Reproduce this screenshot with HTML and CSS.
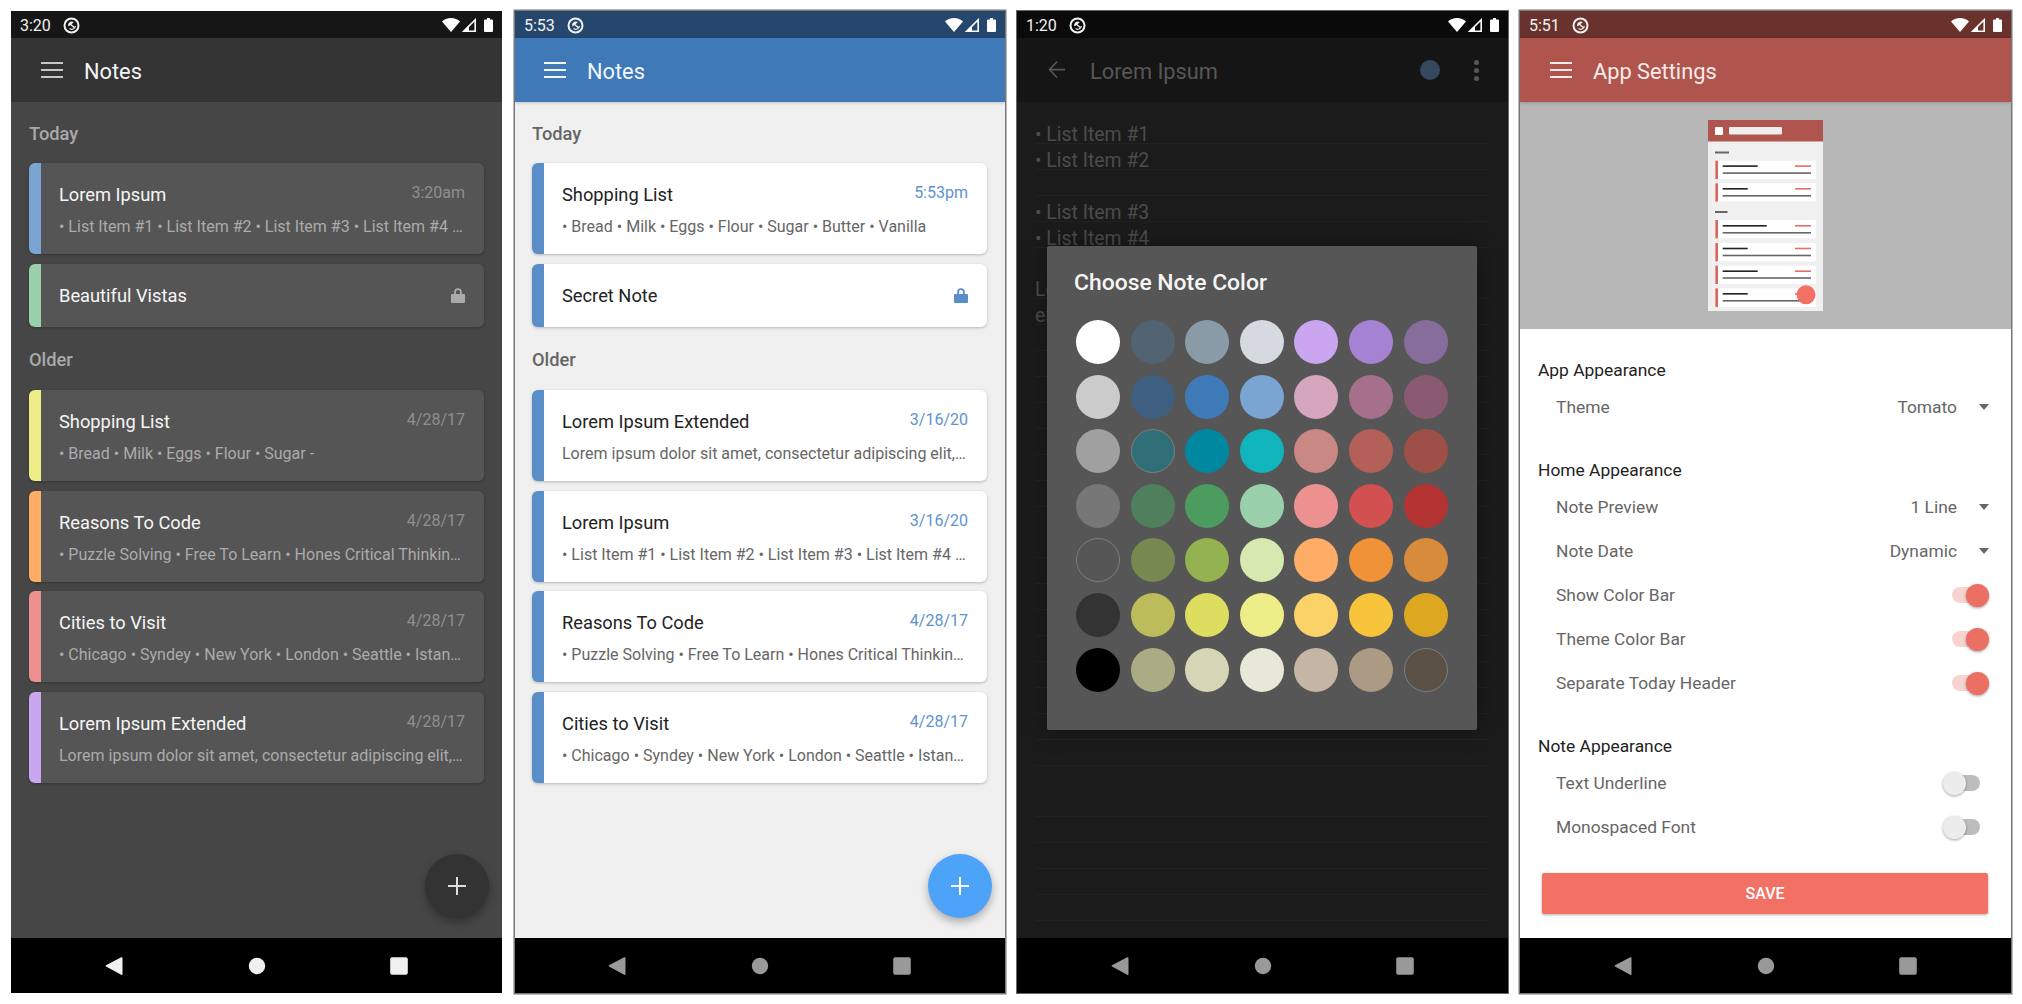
FILE: index.html
```html
<!DOCTYPE html>
<html lang="en">
  <head>
    <meta charset="UTF-8" />
    <title>Notes screenshots</title>
    <link rel="stylesheet" href="styles.css">
  </head>
  <body>
    <!-- shared icons -->
    <svg class="icon-sprite" width="0" height="0">
      <symbol id="i-saver" viewBox="0 0 17 17">
        <circle cx="8.5" cy="8.5" r="7" fill="none" stroke="currentColor" stroke-width="2" />
        <path d="M5.2 7.2a3.6 3.6 0 0 1 5.6-2L5.6 9.6a3.6 3.6 0 0 1-.4-2.4z" fill="currentColor" />
        <path d="M6.5 11.6a3.8 3.8 0 0 0 5.9-2.6" fill="none" stroke="currentColor" stroke-width="1.2" />
        <path d="M7 7l4.6 3.8" fill="none" stroke="currentColor" stroke-width="1.4" />
      </symbol>
      <symbol id="i-wifi" viewBox="0 0 18 14">
        <path d="M9 14L0 3.6C2.2 1.4 5.4 0 9 0s6.8 1.4 9 3.6z" fill="currentColor" />
      </symbol>
      <symbol id="i-cell" viewBox="0 0 14 14">
        <path d="M13.2 1.8V13.2H1.8z" fill="none" stroke="currentColor" stroke-width="1.6" />
        <path d="M7 8h-.2L1.8 13.2H7z" fill="currentColor" />
      </symbol>
      <symbol id="i-battery" viewBox="0 0 9 14">
        <path d="M3 0h3v1.4h2a1 1 0 0 1 1 1V13a1 1 0 0 1-1 1H1a1 1 0 0 1-1-1V2.4a1 1 0 0 1 1-1h2z" fill="currentColor" />
      </symbol>
      <symbol id="i-menu" viewBox="0 0 22 16">
        <path d="M0 0h22v2H0zM0 7h22v2H0zM0 14h22v2H0z" fill="currentColor" />
      </symbol>
      <symbol id="i-lock" viewBox="0 0 14 15">
        <path d="M3.2 6V4a3.8 3.8 0 0 1 7.6 0v2H13a1 1 0 0 1 1 1v7a1 1 0 0 1-1 1H1a1 1 0 0 1-1-1V7a1 1 0 0 1 1-1zM5 6h4V4a2 2 0 0 0-4 0z" fill="currentColor" />
      </symbol>
      <symbol id="i-back" viewBox="0 0 18 20">
        <path d="M17 8.8v1.6H3.4L9.6 17l-1.1 1.1L0.4 9.6 8.5 1.1 9.6 2.2 3.4 8.8z" fill="currentColor" />
      </symbol>
      <symbol id="i-plus" viewBox="0 0 18 18">
        <path d="M8 0h2v8h8v2h-8v8H8v-8H0V8h8z" fill="currentColor" />
      </symbol>
      <symbol id="i-nav-back" viewBox="1 0 20 20">
        <path d="M18.5 2v16c0 .8-.7 1.1-1.3.7L2 10.6c-.5-.3-.5-1 0-1.3L17.2 1.3c.6-.4 1.3 0 1.3.7z" fill="currentColor" />
      </symbol>
      <symbol id="i-nav-home" viewBox="0 0 20 20">
        <circle cx="10" cy="10" r="8.2" fill="currentColor" />
      </symbol>
      <symbol id="i-nav-recent" viewBox="0 0 20 20">
        <rect x="1.2" y="1.2" width="17.6" height="17.6" rx="2" fill="currentColor" />
      </symbol>
    </svg>

    <!-- dark home -->
    <div class="phone theme-dark">
      <div class="status-bar">
        <span class="status-time">3:20</span>
        <svg class="status-saver"><use href="#i-saver" /></svg>
        <div class="status-icons">
          <svg class="ic-wifi"><use href="#i-wifi" /></svg>
          <svg class="ic-cell"><use href="#i-cell" /></svg>
          <svg class="ic-battery"><use href="#i-battery" /></svg>
        </div>
      </div>
      <div class="toolbar">
        <svg class="toolbar-icon"><use href="#i-menu" /></svg>
        <div class="toolbar-title">Notes</div>
      </div>
      <div class="screen note-list">
        <div class="list-heading">Today</div>
        <div class="note-card" style="border-left-color: #7aa5d3">
          <div class="note-head"><span class="note-title">Lorem Ipsum</span><span class="note-date">3:20am</span></div>
          <div class="note-preview">• List Item #1 • List Item #2 • List Item #3 • List Item #4 …</div>
        </div>
        <div class="note-card note-card-locked" style="border-left-color: #99cfab">
          <div class="note-head"><span class="note-title">Beautiful Vistas</span><svg class="note-lock"><use href="#i-lock" /></svg></div>
        </div>
        <div class="list-heading list-heading-older">Older</div>
        <div class="note-card" style="border-left-color: #eeee88">
          <div class="note-head"><span class="note-title">Shopping List</span><span class="note-date">4/28/17</span></div>
          <div class="note-preview">• Bread • Milk • Eggs • Flour • Sugar -</div>
        </div>
        <div class="note-card" style="border-left-color: #ffad66">
          <div class="note-head"><span class="note-title">Reasons To Code</span><span class="note-date">4/28/17</span></div>
          <div class="note-preview">• Puzzle Solving • Free To Learn • Hones Critical Thinkin…</div>
        </div>
        <div class="note-card" style="border-left-color: #ec9090">
          <div class="note-head"><span class="note-title">Cities to Visit</span><span class="note-date">4/28/17</span></div>
          <div class="note-preview">• Chicago • Syndey • New York • London • Seattle • Istan…</div>
        </div>
        <div class="note-card" style="border-left-color: #c9a6ef">
          <div class="note-head"><span class="note-title">Lorem Ipsum Extended</span><span class="note-date">4/28/17</span></div>
          <div class="note-preview">Lorem ipsum dolor sit amet, consectetur adipiscing elit,…</div>
        </div>
        <div class="fab"><svg class="fab-plus"><use href="#i-plus" /></svg></div>
      </div>
      <div class="nav-bar">
        <svg><use href="#i-nav-back" /></svg>
        <svg><use href="#i-nav-home" /></svg>
        <svg><use href="#i-nav-recent" /></svg>
      </div>
    </div>

    <!-- light home -->
    <div class="phone theme-blue">
      <div class="status-bar">
        <span class="status-time">5:53</span>
        <svg class="status-saver"><use href="#i-saver" /></svg>
        <div class="status-icons">
          <svg class="ic-wifi"><use href="#i-wifi" /></svg>
          <svg class="ic-cell"><use href="#i-cell" /></svg>
          <svg class="ic-battery"><use href="#i-battery" /></svg>
        </div>
      </div>
      <div class="toolbar">
        <svg class="toolbar-icon"><use href="#i-menu" /></svg>
        <div class="toolbar-title">Notes</div>
      </div>
      <div class="screen note-list">
        <div class="list-heading">Today</div>
        <div class="note-card">
          <div class="note-head"><span class="note-title">Shopping List</span><span class="note-date">5:53pm</span></div>
          <div class="note-preview">• Bread • Milk • Eggs • Flour • Sugar • Butter • Vanilla</div>
        </div>
        <div class="note-card note-card-locked">
          <div class="note-head"><span class="note-title">Secret Note</span><svg class="note-lock"><use href="#i-lock" /></svg></div>
        </div>
        <div class="list-heading list-heading-older">Older</div>
        <div class="note-card">
          <div class="note-head"><span class="note-title">Lorem Ipsum Extended</span><span class="note-date">3/16/20</span></div>
          <div class="note-preview">Lorem ipsum dolor sit amet, consectetur adipiscing elit,…</div>
        </div>
        <div class="note-card">
          <div class="note-head"><span class="note-title">Lorem Ipsum</span><span class="note-date">3/16/20</span></div>
          <div class="note-preview">• List Item #1 • List Item #2 • List Item #3 • List Item #4 …</div>
        </div>
        <div class="note-card">
          <div class="note-head"><span class="note-title">Reasons To Code</span><span class="note-date">4/28/17</span></div>
          <div class="note-preview">• Puzzle Solving • Free To Learn • Hones Critical Thinkin…</div>
        </div>
        <div class="note-card">
          <div class="note-head"><span class="note-title">Cities to Visit</span><span class="note-date">4/28/17</span></div>
          <div class="note-preview">• Chicago • Syndey • New York • London • Seattle • Istan…</div>
        </div>
        <div class="fab"><svg class="fab-plus"><use href="#i-plus" /></svg></div>
      </div>
      <div class="nav-bar">
        <svg><use href="#i-nav-back" /></svg>
        <svg><use href="#i-nav-home" /></svg>
        <svg><use href="#i-nav-recent" /></svg>
      </div>
    </div>

    <!-- note editor with colour dialog -->
    <div class="phone theme-dim">
      <div class="status-bar">
        <span class="status-time">1:20</span>
        <svg class="status-saver"><use href="#i-saver" /></svg>
        <div class="status-icons">
          <svg class="ic-wifi"><use href="#i-wifi" /></svg>
          <svg class="ic-cell"><use href="#i-cell" /></svg>
          <svg class="ic-battery"><use href="#i-battery" /></svg>
        </div>
      </div>
      <div class="toolbar">
        <svg class="toolbar-back"><use href="#i-back" /></svg>
        <div class="toolbar-title toolbar-title-back">Lorem Ipsum</div>
        <div class="toolbar-dot"></div>
        <div class="toolbar-more"><span></span><span></span><span></span></div>
      </div>
      <div class="screen note-edit">
        <div class="note-lines">
          <div>• List Item #1</div>
          <div>• List Item #2</div>
          <div>&nbsp;</div>
          <div>• List Item #3</div>
          <div>• List Item #4</div>
          <div>&nbsp;</div>
          <div>Lorem ipsum dolor sit amet,</div>
          <div>eiusmod tempor incididunt</div>
        </div>
        <div class="color-dialog">
          <div class="color-dialog-title">Choose Note Color</div>
          <div class="color-grid">
            <div class="swatch" style="background: #ffffff"></div>
            <div class="swatch" style="background: #526372"></div>
            <div class="swatch" style="background: #8a9ba8"></div>
            <div class="swatch" style="background: #d5dae0"></div>
            <div class="swatch" style="background: #c9a6ef"></div>
            <div class="swatch" style="background: #a682d3"></div>
            <div class="swatch" style="background: #866d9c"></div>

            <div class="swatch" style="background: #cbcbcb"></div>
            <div class="swatch" style="background: #3e5f80"></div>
            <div class="swatch" style="background: #3f7ab8"></div>
            <div class="swatch" style="background: #7aa5d3"></div>
            <div class="swatch" style="background: #d6a6bf"></div>
            <div class="swatch" style="background: #a6708c"></div>
            <div class="swatch" style="background: #895a72"></div>

            <div class="swatch" style="background: #a0a0a0"></div>
            <div class="swatch swatch-ring" style="background: #2f6f78"></div>
            <div class="swatch" style="background: #0088a0"></div>
            <div class="swatch" style="background: #10b4bb"></div>
            <div class="swatch" style="background: #c98884"></div>
            <div class="swatch" style="background: #b36058"></div>
            <div class="swatch" style="background: #9e5046"></div>

            <div class="swatch" style="background: #777777"></div>
            <div class="swatch" style="background: #4f7f5c"></div>
            <div class="swatch" style="background: #4c9c60"></div>
            <div class="swatch" style="background: #99cfab"></div>
            <div class="swatch" style="background: #ec9090"></div>
            <div class="swatch" style="background: #d25050"></div>
            <div class="swatch" style="background: #b33333"></div>

            <div class="swatch swatch-ring" style="background: #565656"></div>
            <div class="swatch" style="background: #76894f"></div>
            <div class="swatch" style="background: #94b350"></div>
            <div class="swatch" style="background: #d7e8b0"></div>
            <div class="swatch" style="background: #ffad66"></div>
            <div class="swatch" style="background: #f09338"></div>
            <div class="swatch" style="background: #d98b3d"></div>

            <div class="swatch" style="background: #333333"></div>
            <div class="swatch" style="background: #bcbc5a"></div>
            <div class="swatch" style="background: #dddd60"></div>
            <div class="swatch" style="background: #eeee88"></div>
            <div class="swatch" style="background: #fbd268"></div>
            <div class="swatch" style="background: #f8c43c"></div>
            <div class="swatch" style="background: #dda81f"></div>

            <div class="swatch" style="background: #000000"></div>
            <div class="swatch" style="background: #abab84"></div>
            <div class="swatch" style="background: #d6d5b5"></div>
            <div class="swatch" style="background: #e7e8d8"></div>
            <div class="swatch" style="background: #c4b5a5"></div>
            <div class="swatch" style="background: #ab9a84"></div>
            <div class="swatch swatch-ring" style="background: #5a5046"></div>
          </div>
        </div>
      </div>
      <div class="nav-bar">
        <svg><use href="#i-nav-back" /></svg>
        <svg><use href="#i-nav-home" /></svg>
        <svg><use href="#i-nav-recent" /></svg>
      </div>
    </div>

    <!-- settings -->
    <div class="phone theme-tomato">
      <div class="status-bar">
        <span class="status-time">5:51</span>
        <svg class="status-saver"><use href="#i-saver" /></svg>
        <div class="status-icons">
          <svg class="ic-wifi"><use href="#i-wifi" /></svg>
          <svg class="ic-cell"><use href="#i-cell" /></svg>
          <svg class="ic-battery"><use href="#i-battery" /></svg>
        </div>
      </div>
      <div class="toolbar">
        <svg class="toolbar-icon"><use href="#i-menu" /></svg>
        <div class="toolbar-title">App Settings</div>
      </div>
      <div class="screen settings">
        <div class="preview-band">
          <svg class="preview-thumb" viewBox="0 0 115 191">
            <rect width="115" height="191" fill="#f0f0f0" />
            <rect width="115" height="21.5" fill="#b0554d" />
            <rect x="7" y="7" width="8" height="8" rx="1" fill="#fff" />
            <rect x="21" y="7" width="53" height="7.5" rx="1" fill="#eee" />
            <rect x="7" y="31.5" width="14" height="2" fill="#666" />
            <rect x="7" y="91" width="12.5" height="2" fill="#666" />

            <rect x="7.3" y="40.7" width="100.7" height="18.3" fill="#fff" />
            <rect x="7.3" y="40.7" width="2.7" height="18.3" fill="#d9685f" />
            <rect x="14.7" y="45.3" width="35" height="1.6" fill="#222" />
            <rect x="87" y="45.3" width="16" height="1.6" fill="#e07068" />
            <rect x="14.7" y="52.3" width="88.3" height="1.6" fill="#666" />

            <rect x="7.3" y="63.3" width="100.7" height="18.3" fill="#fff" />
            <rect x="7.3" y="63.3" width="2.7" height="18.3" fill="#d9685f" />
            <rect x="14.7" y="68" width="25" height="1.6" fill="#222" />
            <rect x="87" y="68" width="16" height="1.6" fill="#e07068" />
            <rect x="14.7" y="75" width="88.3" height="1.6" fill="#666" />

            <rect x="7.3" y="100" width="100.7" height="18.3" fill="#fff" />
            <rect x="7.3" y="100" width="2.7" height="18.3" fill="#d9685f" />
            <rect x="14.7" y="105" width="44" height="1.6" fill="#222" />
            <rect x="87" y="105" width="16" height="1.6" fill="#e07068" />
            <rect x="14.7" y="112" width="88.3" height="1.6" fill="#666" />

            <rect x="7.3" y="123" width="100.7" height="18.3" fill="#fff" />
            <rect x="7.3" y="123" width="2.7" height="18.3" fill="#d9685f" />
            <rect x="14.7" y="127.7" width="25" height="1.6" fill="#222" />
            <rect x="87" y="127.7" width="16" height="1.6" fill="#e07068" />
            <rect x="14.7" y="134.7" width="88.3" height="1.6" fill="#666" />

            <rect x="7.3" y="145.7" width="100.7" height="18.3" fill="#fff" />
            <rect x="7.3" y="145.7" width="2.7" height="18.3" fill="#d9685f" />
            <rect x="14.7" y="150.4" width="35" height="1.6" fill="#222" />
            <rect x="87" y="150.4" width="16" height="1.6" fill="#e07068" />
            <rect x="14.7" y="157.2" width="88.3" height="1.6" fill="#666" />

            <rect x="7.3" y="168.3" width="100.7" height="18.7" fill="#fff" />
            <rect x="7.3" y="168.3" width="2.7" height="18.7" fill="#d9685f" />
            <rect x="14.7" y="173" width="25" height="1.6" fill="#222" />
            <rect x="87" y="173" width="16" height="1.6" fill="#e07068" />
            <rect x="14.7" y="180" width="88.3" height="1.6" fill="#666" />
            <circle cx="98" cy="174.7" r="9.5" fill="#f37164" />
          </svg>
        </div>
        <div class="settings-form">
          <div class="settings-section">
            <div class="settings-heading">App Appearance</div>
            <div class="settings-row"><span>Theme</span><span class="select-value">Tomato</span><i class="select-caret"></i></div>
          </div>
          <div class="settings-section">
            <div class="settings-heading">Home Appearance</div>
            <div class="settings-row"><span>Note Preview</span><span class="select-value">1 Line</span><i class="select-caret"></i></div>
            <div class="settings-row"><span>Note Date</span><span class="select-value">Dynamic</span><i class="select-caret"></i></div>
            <div class="settings-row"><span>Show Color Bar</span><div class="toggle toggle-on"><i></i></div></div>
            <div class="settings-row"><span>Theme Color Bar</span><div class="toggle toggle-on"><i></i></div></div>
            <div class="settings-row"><span>Separate Today Header</span><div class="toggle toggle-on"><i></i></div></div>
          </div>
          <div class="settings-section">
            <div class="settings-heading">Note Appearance</div>
            <div class="settings-row"><span>Text Underline</span><div class="toggle"><i></i></div></div>
            <div class="settings-row"><span>Monospaced Font</span><div class="toggle"><i></i></div></div>
          </div>
          <div class="save-button">SAVE</div>
        </div>
      </div>
      <div class="nav-bar">
        <svg><use href="#i-nav-back" /></svg>
        <svg><use href="#i-nav-home" /></svg>
        <svg><use href="#i-nav-recent" /></svg>
      </div>
    </div>
  </body>
</html>
```

FILE: styles.css
```css
* {
  box-sizing: border-box;
}

body {
  margin: 0;
  padding: 11px;
  height: 1004px;
  display: flex;
  gap: 12px;
  background-color: #fff;
  font-family: Roboto, "Liberation Sans", sans-serif;
  overflow: hidden;
}

.icon-sprite {
  position: absolute;
}

.phone {
  width: 491px;
  height: 982px;
  flex: none;
  display: flex;
  flex-direction: column;
  overflow: hidden;
}

/* status bar */
.status-bar {
  height: 27px;
  flex: none;
  display: flex;
  align-items: center;
  padding: 0 9px;
  color: #f2f2f2;
  font-size: 16px;
}

.status-time {
  width: 30px;
  margin-top: 1px;
}

.status-saver {
  width: 17px;
  height: 17px;
  margin-left: 13px;
  margin-top: 2px;
}

.status-icons {
  margin-left: auto;
  display: flex;
  align-items: center;
  color: #fff;
}

.ic-wifi {
  width: 18px;
  height: 14px;
}

.ic-cell {
  width: 14px;
  height: 14px;
  margin-left: 2px;
}

.ic-battery {
  width: 9px;
  height: 14px;
  margin-left: 8px;
}

/* toolbar */
.toolbar {
  height: 64px;
  flex: none;
  display: flex;
  align-items: center;
  padding-left: 30px;
  position: relative;
  z-index: 1;
}

.toolbar-icon {
  width: 22px;
  height: 16px;
  margin-right: 21px;
}

.toolbar-title {
  margin-top: 2px;
  font-size: 21.8px;
}

.toolbar-back {
  width: 18px;
  height: 20px;
  margin-left: 1px;
}

.toolbar-title-back {
  margin-left: 24px;
}

.toolbar-dot {
  width: 20px;
  height: 20px;
  margin-left: auto;
  border-radius: 50%;
  background-color: #34495f;
}

.toolbar-more {
  width: 5px;
  margin: 0 29px 0 34px;
  display: flex;
  flex-direction: column;
  gap: 3px;
}

.toolbar-more span {
  height: 5px;
  border-radius: 50%;
  background-color: #575757;
}

.screen {
  flex: 1;
  min-height: 0;
  position: relative;
}

/* note list */
.note-list {
  padding: 20px 18px 0;
}

.list-heading {
  font-size: 18.3px;
  font-weight: 500;
  line-height: 24px;
  margin-bottom: 17px;
}

.list-heading-older {
  margin-top: 21.5px;
  margin-bottom: 18px;
}

.note-card {
  height: 91px;
  margin-bottom: 9.5px;
  padding: 20px 19px 0 18px;
  border-left: 12px solid #5a8ec8;
  border-radius: 6px;
}

.note-card-locked {
  height: 63px;
  padding-top: 20px;
}

.note-head {
  display: flex;
  justify-content: space-between;
  height: 24px;
}

.note-title {
  font-size: 18.3px;
  line-height: 24px;
}

.note-date {
  margin-top: -1px;
  font-size: 16px;
  line-height: 21px;
}

.note-lock {
  width: 14px;
  height: 15px;
  margin-top: 4px;
}

.note-preview {
  margin-top: 9px;
  font-size: 16px;
  line-height: 22px;
  white-space: nowrap;
  overflow: hidden;
}

.fab {
  position: absolute;
  right: 13px;
  bottom: 20px;
  width: 64px;
  height: 64px;
  border-radius: 50%;
  display: flex;
  align-items: center;
  justify-content: center;
  box-shadow: 0 4px 8px rgba(0, 0, 0, 0.3);
}

.fab-plus {
  width: 18px;
  height: 18px;
}

/* android nav */
.nav-bar {
  height: 55px;
  flex: none;
  display: flex;
  align-items: center;
  justify-content: center;
  gap: 122px;
  background-color: #000;
  color: #999;
}

.nav-bar svg {
  width: 20px;
  height: 20px;
}

/* themes */
.theme-dark .status-bar {
  background-color: #161616;
}

.theme-dark .toolbar {
  background-color: #343434;
  color: #f5f5f5;
}

.theme-dark .toolbar-icon {
  color: #c8c8c8;
}

.theme-dark .note-list {
  background-color: #464646;
  color: #a9a9a9;
}

.theme-dark .note-card {
  background-color: #555;
  box-shadow: 0 1px 3px rgba(0, 0, 0, 0.25);
}

.theme-dark .note-title {
  color: #f5f5f5;
}

.theme-dark .note-date {
  color: #8f8f8f;
}

.theme-dark .note-preview {
  color: #ababab;
}

.theme-dark .note-lock {
  color: #aaa;
}

.theme-dark .fab {
  background-color: #333;
  color: #ddd;
}

.theme-dark .nav-bar {
  color: #f0f0f0;
}

.theme-blue {
  width: 490px;
  margin-left: 1px;
  box-shadow: 0 0 0 1.5px #777;
}

.theme-blue .status-bar {
  background-color: #26476d;
}

.theme-blue .toolbar {
  padding-left: 29px;
  background-color: #3f79b8;
  color: #f0f6fb;
  box-shadow: 0 1px 3px rgba(0, 0, 0, 0.2);
}

.theme-blue .note-list {
  padding-left: 17px;
  background-color: #f0f0f0;
  color: #666;
}

.theme-blue .note-card {
  background-color: #fff;
  box-shadow: 0 1px 3px rgba(0, 0, 0, 0.25);
}

.theme-blue .note-title {
  color: #222;
}

.theme-blue .note-date {
  color: #5e92d0;
}

.theme-blue .note-preview {
  color: #666;
}

.theme-blue .note-lock {
  color: #5a8ec8;
}

.theme-blue .fab {
  background-color: #4da3f8;
  color: #fff;
}

.theme-dim {
  box-shadow: 0 0 0 1px #666;
}

.theme-dim .status-bar {
  background-color: #0a0a0a;
}

.theme-dim .toolbar {
  background-color: #151515;
  color: #575757;
}

.theme-tomato {
  box-shadow: 0 0 0 1.5px #777;
}

.theme-tomato .status-bar {
  background-color: #69322d;
}

.theme-tomato .toolbar {
  background-color: #b0554d;
  color: #f7ecea;
  box-shadow: 0 1px 3px rgba(0, 0, 0, 0.2);
}

/* note editor */
.note-edit {
  background-color: #1b1b1b;
  padding: 16px 18px 0;
}

.note-lines {
  height: 804px;
  padding-top: 4px;
  font-size: 19.4px;
  line-height: 25.9px;
  color: #4c4c4c;
  background-image: repeating-linear-gradient(to bottom, transparent 0, transparent 25px, #222 25px, #222 25.9px);
}

.color-dialog {
  position: absolute;
  left: 30px;
  top: 144px;
  width: 430px;
  height: 484px;
  padding: 23px 0 0 29px;
  border-radius: 2px;
  background-color: #565656;
  box-shadow: 0 0 24px rgba(0, 0, 0, 0.35);
}

.color-dialog-title {
  margin-left: -2px;
  margin-bottom: 23px;
  font-size: 22.9px;
  font-weight: 500;
  line-height: 28px;
  color: #f5f5f5;
}

.color-grid {
  display: grid;
  grid-template-columns: repeat(7, 44px);
  grid-auto-rows: 44px;
  gap: 10.6px;
}

.swatch {
  border-radius: 50%;
}

.swatch-ring {
  border: 1px solid #7d7d7d;
}

/* settings */
.settings {
  background-color: #fff;
}

.preview-band {
  height: 227px;
  display: flex;
  justify-content: center;
  padding-top: 18px;
  background-color: #b7b7b7;
}

.preview-thumb {
  width: 115px;
  height: 191px;
}

.settings-form {
  padding: 24px 23px 0 18px;
}

.settings-section {
  margin-bottom: 24px;
}

.settings-heading {
  height: 32px;
  font-size: 17.4px;
  line-height: 34px;
  color: #222;
}

.settings-row {
  height: 44px;
  padding-left: 18px;
  display: flex;
  align-items: center;
  font-size: 17.4px;
  color: #666;
}

.select-value {
  margin-left: auto;
}

.select-caret {
  width: 0;
  height: 0;
  margin-left: 22px;
  margin-right: -1px;
  border-left: 5.5px solid transparent;
  border-right: 5.5px solid transparent;
  border-top: 6px solid #666;
}

.toggle {
  width: 28px;
  height: 16px;
  margin-left: auto;
  margin-right: 8px;
  border-radius: 8px;
  position: relative;
  background-color: #bdbdbd;
}

.toggle i {
  position: absolute;
  top: -3.5px;
  left: -9px;
  width: 23px;
  height: 23px;
  border-radius: 50%;
  background-color: #ececec;
  box-shadow: 0 1px 3px rgba(0, 0, 0, 0.35);
}

.toggle-on {
  background-color: #f8d4d0;
}

.toggle-on i {
  left: auto;
  right: -9px;
  background-color: #ec6f63;
}

.save-button {
  height: 41px;
  margin: 23px 0 0 4px;
  border-radius: 2px;
  display: flex;
  align-items: center;
  justify-content: center;
  font-size: 16px;
  font-weight: 500;
  color: #fff;
  background-color: #f37164;
  box-shadow: 0 1px 3px rgba(0, 0, 0, 0.3);
}
```
